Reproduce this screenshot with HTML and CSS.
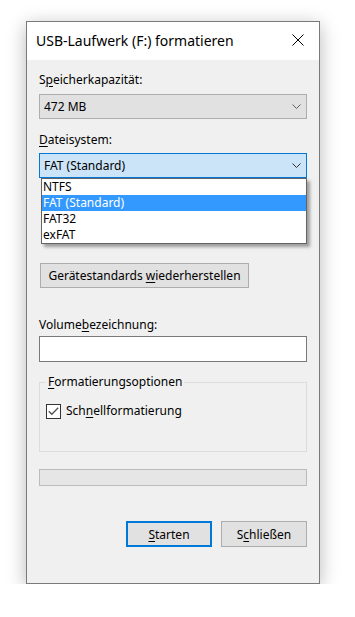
FILE: index.html
```html
<!DOCTYPE html>
<html lang="de">
<head>
  <meta charset="UTF-8">
  <meta name="viewport" content="width=device-width, initial-scale=1.0">
  <title>USB-Laufwerk (F:) formatieren</title>
  <link rel="stylesheet" href="styles.css">
</head>
<body>
  <div class="window">
    <div class="titlebar">
      <span class="title">USB-Laufwerk (F:) formatieren</span>
      <svg class="close" width="12" height="12" viewBox="0 0 12 12">
        <path d="M0.5 0.5 L11.5 11.5 M11.5 0.5 L0.5 11.5" stroke="#000" stroke-width="1" fill="none"/>
      </svg>
    </div>

    <div class="content">
      <div class="label">S<u>p</u>eicherkapazität:</div>
      <div class="combo">
        <span>472 MB</span>
        <svg class="chevron" width="9" height="5" viewBox="0 0 9 5">
          <path d="M0.5 0.5 L4.5 4.5 L8.5 0.5" stroke="#606060" fill="none"/>
        </svg>
      </div>

      <div class="label label-gap"><u>D</u>ateisystem:</div>
      <div class="combo-wrap">
        <div class="combo combo-open">
          <span>FAT (Standard)</span>
          <svg class="chevron" width="9" height="5" viewBox="0 0 9 5">
            <path d="M0.5 0.5 L4.5 4.5 L8.5 0.5" stroke="#303030" fill="none"/>
          </svg>
        </div>
        <ul class="dropdown">
          <li>NTFS</li>
          <li class="selected">FAT (Standard)</li>
          <li>FAT32</li>
          <li>exFAT</li>
        </ul>
      </div>

      <button class="btn btn-defaults" type="button">Gerätestandards <u>w</u>iederherstellen</button>

      <div class="label label-volume">Volume<u>b</u>ezeichnung:</div>
      <input class="textbox" type="text">

      <fieldset class="group">
        <legend><u>F</u>ormatierungsoptionen</legend>
        <label class="check">
          <span class="checkbox">
            <svg width="11" height="9" viewBox="0 0 11 9">
              <path d="M0.8 4.3 L3.8 7.3 L10.2 0.8" stroke="#505050" stroke-width="1.3" fill="none"/>
            </svg>
          </span>
          <span>Sch<u>n</u>ellformatierung</span>
        </label>
      </fieldset>

      <div class="progress"></div>

      <div class="actions">
        <button class="btn btn-primary" type="button"><u>S</u>tarten</button>
        <button class="btn" type="button">S<u>c</u>hließen</button>
      </div>
    </div>
  </div>
</body>
</html>
```

FILE: styles.css
```css
body {
  margin: 0;
  background-color: #ffffff;
  font-family: 'Segoe UI', 'Noto Sans', sans-serif;
  font-size: 12px;
  color: #000;
}
.window {
  margin: 21px 0 0 26px;
  width: 292px;
  height: 561px;
  border: 1px solid #7a7a7a;
  background-color: #f0f0f0;
  box-shadow: 0 4px 18px rgba(0, 0, 0, 0.28);
}
.titlebar {
  height: 38px;
  background-color: #ffffff;
  display: flex;
  align-items: center;
  justify-content: space-between;
  padding: 0 15px 0 9px;
}
.title {
  font-size: 14px;
  margin-top: -1px;
}
.close {
  margin-top: -2px;
}
.content {
  padding: 12px 12px 0 12px;
}
.label {
  line-height: 16px;
  margin-bottom: 6px;
}
u {
  text-decoration-thickness: 1px;
  text-underline-offset: 2px;
}
.label-gap {
  margin-top: 13px;
  margin-bottom: 5px;
}
.combo {
  height: 23px;
  border: 1px solid #adadad;
  background-color: #e1e1e1;
  display: flex;
  align-items: center;
  justify-content: space-between;
  padding: 0 5px 0 4px;
}
.combo-open {
  border-color: #0078d7;
  background-color: #cce4f7;
}
.combo-wrap {
  position: relative;
}
.dropdown {
  position: absolute;
  top: 100%;
  left: 2px;
  right: 0;
  margin: 0;
  padding: 0;
  list-style: none;
  background-color: #ffffff;
  border: 1px solid #646464;
  box-shadow: 3px 3px 3px rgba(0, 0, 0, 0.35);
  z-index: 2;
}
.dropdown li {
  height: 16px;
  line-height: 16px;
  padding-left: 1px;
}
.dropdown .selected {
  background-color: #3399ff;
  color: #ffffff;
}
.btn {
  height: 26px;
  width: 86px;
  border: 1px solid #adadad;
  background-color: #e1e1e1;
  font-family: inherit;
  font-size: 12px;
  color: #000;
  padding: 0;
}
.btn-defaults {
  display: block;
  width: 209px;
  height: 25px;
  margin: 85px 0 0 1px;
}
.label-volume {
  margin-top: 29px;
  margin-bottom: 3px;
}
.textbox {
  display: block;
  box-sizing: border-box;
  width: 100%;
  height: 26px;
  margin: 0;
  border: 1px solid #7a7a7a;
  background-color: #ffffff;
}
.group {
  margin: 12px 0 0 0;
  padding: 13px 6px 32px 6px;
  border: 1px solid #dcdcdc;
  min-width: 0;
}
.group legend {
  padding: 0 2px;
  line-height: 16px;
}
.check {
  display: flex;
  align-items: center;
  gap: 5px;
  line-height: 16px;
}
.checkbox {
  box-sizing: border-box;
  width: 15px;
  height: 15px;
  border: 1px solid #333333;
  background-color: #ffffff;
  display: flex;
  align-items: center;
  justify-content: center;
}
.progress {
  margin-top: 17px;
  height: 15px;
  border: 1px solid #bcbcbc;
  background-color: #e6e6e6;
}
.actions {
  display: flex;
  justify-content: flex-end;
  gap: 9px;
  margin-top: 35px;
}
.btn-primary {
  border: 2px solid #0078d7;
}
```
